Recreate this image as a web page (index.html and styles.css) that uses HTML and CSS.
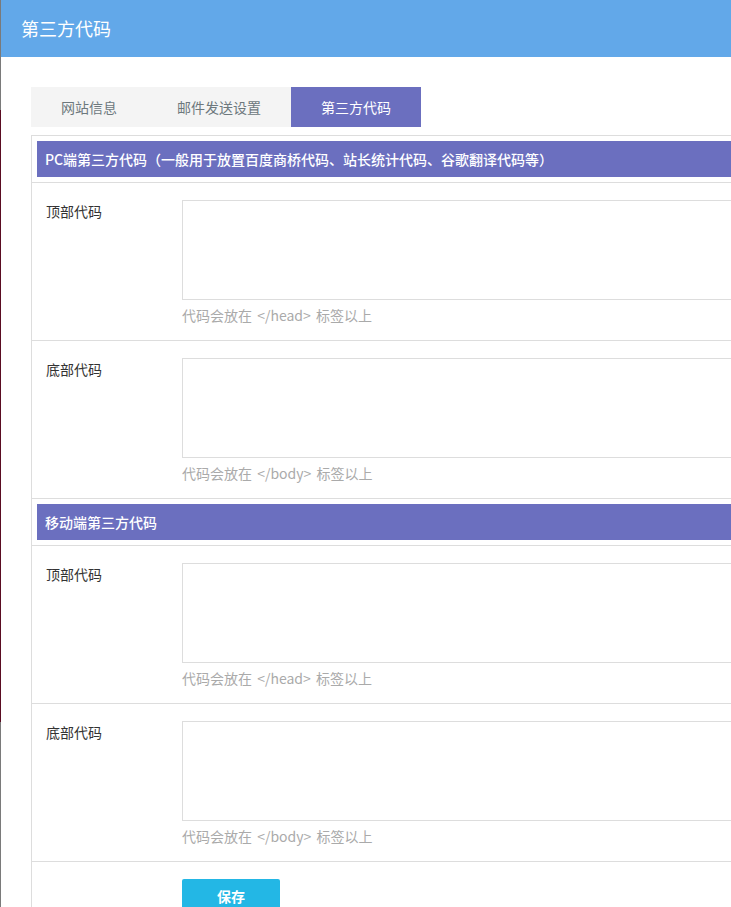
FILE: index.html
```html
<!DOCTYPE html>
<html lang="zh-CN">
<head>
<meta charset="utf-8">
<title>第三方代码</title>
<link rel="stylesheet" href="styles.css">
</head>
<body>
<div class="edge"></div>
<header class="topbar">第三方代码</header>
<main class="page">
  <nav class="tabs">
    <a class="tab">网站信息</a>
    <a class="tab">邮件发送设置</a>
    <a class="tab active">第三方代码</a>
  </nav>
  <form class="box">
    <div class="sec-head"><div class="bar">PC端第三方代码（一般用于放置百度商桥代码、站长统计代码、谷歌翻译代码等）</div></div>
    <div class="row">
      <label class="label">顶部代码</label>
      <div class="field">
        <textarea class="code"></textarea>
        <div class="help">代码会放在 &lt;/head&gt; 标签以上</div>
      </div>
    </div>
    <div class="row">
      <label class="label">底部代码</label>
      <div class="field">
        <textarea class="code"></textarea>
        <div class="help">代码会放在 &lt;/body&gt; 标签以上</div>
      </div>
    </div>
    <div class="sec-head"><div class="bar">移动端第三方代码</div></div>
    <div class="row">
      <label class="label">顶部代码</label>
      <div class="field">
        <textarea class="code"></textarea>
        <div class="help">代码会放在 &lt;/head&gt; 标签以上</div>
      </div>
    </div>
    <div class="row">
      <label class="label">底部代码</label>
      <div class="field">
        <textarea class="code"></textarea>
        <div class="help">代码会放在 &lt;/body&gt; 标签以上</div>
      </div>
    </div>
    <div class="actions">
      <button type="button" class="btn">保存</button>
    </div>
  </form>
</main>
</body>
</html>
```
FILE: styles.css
```css
html, body {
  margin: 0;
  padding: 0;
  overflow: hidden;
  background: #fff;
}
body {
  font-family: "Microsoft YaHei", "Noto Sans CJK SC", "Noto Sans", sans-serif;
  font-size: 14px;
  color: #333;
  padding-left: 1px;
  width: 900px;
}
.edge {
  position: fixed;
  left: 0;
  top: 0;
  width: 1px;
  height: 907px;
  background: linear-gradient(to bottom, #7a7a7a 0, #7a7a7a 110px, #5a0c22 110px, #5a0c22 722px, #7a7a7a 722px);
}
.topbar {
  height: 57px;
  line-height: 56px;
  background: #62a8e9;
  color: #fff;
  font-size: 18px;
  padding-left: 20px;
}
.page {
  padding: 30px 0 0 30px;
}
.tabs {
  display: flex;
  margin-bottom: 8px;
}
.tab {
  height: 40px;
  line-height: 40px;
  padding: 0 30px;
  background: #f4f4f4;
  color: #6d787d;
  font-size: 14px;
}
.tab.active {
  background: #6b6fbf;
  color: #fff;
}
.box {
  width: 800px;
  border: 1px solid #ddd;
  border-right: none;
}
.sec-head {
  padding: 5px 0 5px 5px;
  border-bottom: 1px solid #ddd;
}
.bar {
  height: 36px;
  line-height: 36px;
  background: #6b6fbf;
  color: #fff;
  font-weight: 500;
  padding-left: 8px;
  font-size: 14px;
}
.row {
  display: flex;
  padding: 17px 0 15px 14px;
  border-bottom: 1px solid #ddd;
}
.label {
  width: 136px;
  line-height: 22px;
  color: #333;
  font-size: 14px;
}
.code {
  display: block;
  box-sizing: border-box;
  width: 600px;
  height: 100px;
  border: 1px solid #ddd;
  margin: 0;
  resize: none;
}
.help {
  margin-top: 5px;
  line-height: 20px;
  color: #aaa;
  font-size: 14px;
  word-spacing: 2px;
}
.actions {
  padding: 17px 0 0 150px;
}
.btn {
  width: 98px;
  height: 34px;
  border: none;
  border-radius: 2px;
  background: #23b7e5;
  color: #fff;
  font-family: inherit;
  font-size: 14px;
  font-weight: bold;
}
```
